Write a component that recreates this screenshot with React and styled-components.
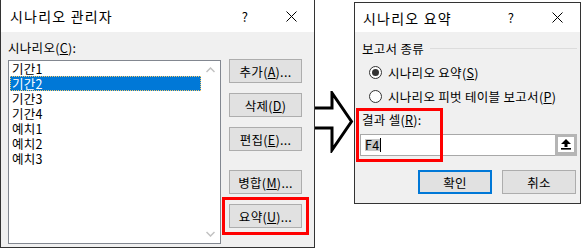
import React from 'react';
import styled, { createGlobalStyle } from 'styled-components';

const Global = createGlobalStyle`
  html, body { margin: 0; padding: 0; background: #fff; }
  body {
    font-family: "Noto Sans CJK KR", "Noto Sans", sans-serif;
    font-size: 12.5px;
    letter-spacing: 0.3px;
    color: #000;
  }
  u { text-decoration: underline; text-underline-offset: 1px; }
`;

const Page = styled.div`
  display: flex;
  align-items: flex-start;
  width: 584px;
  height: 249px;
  overflow: hidden;
`;

const Dialog = styled.div`
  box-sizing: border-box;
  display: flex;
  flex-direction: column;
  flex: none;
  background: #f0f0f0;
  border: 1px solid #333;
  position: relative;
`;

const LeftDialog = styled(Dialog)`
  width: 315px;
  height: 248px;
  border-top: none;
`;

const RightDialog = styled(Dialog)`
  width: 227px;
  height: 202px;
  margin-top: 2px;
`;

const TitleBar = styled.div`
  display: flex;
  align-items: center;
  flex: none;
  height: ${p => p.$h}px;
  background: #fff;
`;

const Title = styled.div`
  flex: 1;
  padding-left: ${p => p.$pad}px;
  font-size: 14px;
  letter-spacing: 1.2px;
  line-height: 16px;
  white-space: nowrap;
`;

const CaptionButton = styled.div`
  width: 46px;
  height: 100%;
  display: flex;
  align-items: center;
  justify-content: center;
  font-size: 13px;
`;

const LeftBody = styled.div`
  flex: 1;
  display: flex;
  flex-direction: column;
  padding: 8px 0 0 7px;
`;

const FieldLabel = styled.div`
  height: 16px;
  line-height: 16px;
  margin: ${p => p.$m || '0 0 4px 0'};
  white-space: nowrap;
`;

const ManagerRow = styled.div`
  display: flex;
  align-items: flex-start;
  gap: 8px;
`;

const ListBox = styled.div`
  box-sizing: border-box;
  width: 213px;
  height: 184px;
  border: 1px solid #828790;
  background: #fff;
  display: flex;
`;

const Items = styled.div`
  flex: 1;
  padding-left: 1px;
`;

const Item = styled.div`
  height: 15px;
  line-height: 15px;
  padding-left: 2px;
  white-space: nowrap;
  background: ${p => (p.$selected ? '#0078d7' : 'transparent')};
  color: ${p => (p.$selected ? '#fff' : '#000')};
  outline: ${p => (p.$selected ? '1px dotted #f5c96a' : 'none')};
  outline-offset: -1px;
`;

const ScrollBar = styled.div`
  width: 19px;
  display: flex;
  flex-direction: column;
  justify-content: space-between;
  background: #fff;
`;

const ScrollArrow = styled.div`
  height: 18px;
  display: flex;
  align-items: center;
  justify-content: center;
`;

const ButtonColumn = styled.div`
  display: flex;
  flex-direction: column;
  margin-top: -1px;
`;

const Button = styled.div`
  box-sizing: border-box;
  width: ${p => p.$w || 73}px;
  height: 24px;
  display: flex;
  align-items: center;
  justify-content: center;
  background: #e1e1e1;
  border: ${p => (p.$default ? '2px solid #0078d7' : '1px solid #adadad')};
  margin-top: ${p => p.$mt || 0}px;
  white-space: nowrap;
  outline: ${p => (p.$marked ? '3px solid #ff0000' : 'none')};
  outline-offset: 4px;
`;

const RightBody = styled.div`
  flex: 1;
  display: flex;
  flex-direction: column;
  padding: 8px 3px 0 5px;
`;

const GroupHeader = styled.div`
  display: flex;
  align-items: center;
  gap: 6px;
  height: 16px;
  margin-left: 2px;
  white-space: nowrap;
`;

const GroupLine = styled.div`
  flex: 1;
  height: 1px;
  background: #dcdcdc;
`;

const RadioList = styled.div`
  display: flex;
  flex-direction: column;
  gap: 8px;
  margin-top: 8px;
  padding-left: 9px;
`;

const RadioRow = styled.div`
  display: flex;
  align-items: center;
  gap: 6px;
  height: 16px;
  white-space: nowrap;
`;

const RadioCircle = styled.div`
  box-sizing: border-box;
  flex: none;
  width: 13px;
  height: 13px;
  border-radius: 50%;
  border: 1px solid #333;
  background: #fff;
  display: flex;
  align-items: center;
  justify-content: center;
  &::after {
    content: '';
    display: ${p => (p.$checked ? 'block' : 'none')};
    width: 7px;
    height: 7px;
    border-radius: 50%;
    background: #333;
  }
`;

const InputRow = styled.div`
  display: flex;
  height: 22px;
  margin-top: 6px;
`;

const TextBox = styled.div`
  flex: 1;
  box-sizing: border-box;
  border: 1px solid #a8a8a8;
  border-right: none;
  background: #fff;
  display: flex;
  align-items: center;
  padding-left: 4px;
`;

const Selected = styled.span`
  background: #c8c8c8;
  line-height: 12px;
  padding: 0 1px 0 0;
`;

const Caret = styled.span`
  display: inline-block;
  width: 1px;
  height: 14px;
  background: #000;
`;

const RefButton = styled.div`
  box-sizing: border-box;
  width: 22px;
  height: 22px;
  border: 3px solid #b5b5b5;
  border-bottom-width: 4px;
  background: #fff;
  display: flex;
  align-items: center;
  justify-content: center;
`;

const ButtonRow = styled.div`
  display: flex;
  justify-content: flex-end;
  gap: 10px;
  margin-top: 14px;
  padding-right: 1px;
`;

const Annotation = styled.div`
  position: absolute;
  left: 1px;
  top: 105px;
  width: 87px;
  height: 54px;
  box-sizing: border-box;
  border: 3px solid #ff0000;
  pointer-events: none;
`;

const ArrowSlot = styled.div`
  width: 39px;
  flex: none;
  margin-top: 91px;
  display: flex;
`;

const CloseIcon = () => (
  <svg width="11" height="11" viewBox="0 0 11 11">
    <path d="M0.5 0.5 L10.5 10.5 M10.5 0.5 L0.5 10.5" stroke="#000" strokeWidth="1" fill="none" />
  </svg>
);

const Chevron = ({ up }) => (
  <svg width="9" height="6" viewBox="0 0 9 6">
    <path
      d={up ? 'M0.5 5 L4.5 1 L8.5 5' : 'M0.5 1 L4.5 5 L8.5 1'}
      stroke="#c2c2c2"
      strokeWidth="1.5"
      fill="none"
    />
  </svg>
);

const UpArrowIcon = () => (
  <svg width="10" height="11" viewBox="0 0 10 11">
    <polygon points="5,0 10,5 6.5,5 6.5,8 3.5,8 3.5,5 0,5" fill="#000" />
    <rect x="0" y="9" width="10" height="1.6" fill="#000" />
  </svg>
);

const BigArrow = () => (
  <svg width="39" height="62" viewBox="0 0 39 62">
    <polyline
      points="0,17 17,17 17,2 36.5,30.5 17,59 17,37 0,37"
      fill="#fff"
      stroke="#000"
      strokeWidth="3"
      strokeLinejoin="miter"
    />
  </svg>
);

const scenarios = ['기간1', '기간2', '기간3', '기간4', '예치1', '예치2', '예치3'];

export default function App() {
  return (
    <>
      <Global />
      <Page>
        <LeftDialog>
          <TitleBar $h={32}>
            <Title $pad={9}>시나리오 관리자</Title>
            <CaptionButton>?</CaptionButton>
            <CaptionButton><CloseIcon /></CaptionButton>
          </TitleBar>
          <LeftBody>
            <FieldLabel>시나리오(<u>C</u>):</FieldLabel>
            <ManagerRow>
              <ListBox>
                <Items>
                  {scenarios.map(s => (
                    <Item key={s} $selected={s === '기간2'}>{s}</Item>
                  ))}
                </Items>
                <ScrollBar>
                  <ScrollArrow><Chevron up /></ScrollArrow>
                  <ScrollArrow><Chevron /></ScrollArrow>
                </ScrollBar>
              </ListBox>
              <ButtonColumn>
                <Button><span>추가(<u>A</u>)...</span></Button>
                <Button $mt={10}><span>삭제(<u>D</u>)</span></Button>
                <Button $mt={10}><span>편집(<u>E</u>)...</span></Button>
                <Button $mt={19}><span>병합(<u>M</u>)...</span></Button>
                <Button $mt={10} $marked><span>요약(<u>U</u>)...</span></Button>
              </ButtonColumn>
            </ManagerRow>
          </LeftBody>
        </LeftDialog>

        <ArrowSlot><BigArrow /></ArrowSlot>

        <RightDialog>
          <TitleBar $h={29}>
            <Title $pad={8}>시나리오 요약</Title>
            <CaptionButton>?</CaptionButton>
            <CaptionButton><CloseIcon /></CaptionButton>
          </TitleBar>
          <RightBody>
            <GroupHeader>
              <span>보고서 종류</span>
              <GroupLine />
            </GroupHeader>
            <RadioList>
              <RadioRow>
                <RadioCircle $checked />
                <span>시나리오 요약(<u>S</u>)</span>
              </RadioRow>
              <RadioRow>
                <RadioCircle />
                <span>시나리오 피벗 테이블 보고서(<u>P</u>)</span>
              </RadioRow>
            </RadioList>
            <FieldLabel $m="8px 0 0 2px">결과 셀(<u>R</u>):</FieldLabel>
            <InputRow>
              <TextBox>
                <Selected>F4</Selected>
                <Caret />
              </TextBox>
              <RefButton><UpArrowIcon /></RefButton>
            </InputRow>
            <ButtonRow>
              <Button $w={74} $default>확인</Button>
              <Button $w={74}>취소</Button>
            </ButtonRow>
          </RightBody>
          <Annotation />
        </RightDialog>
      </Page>
    </>
  );
}
